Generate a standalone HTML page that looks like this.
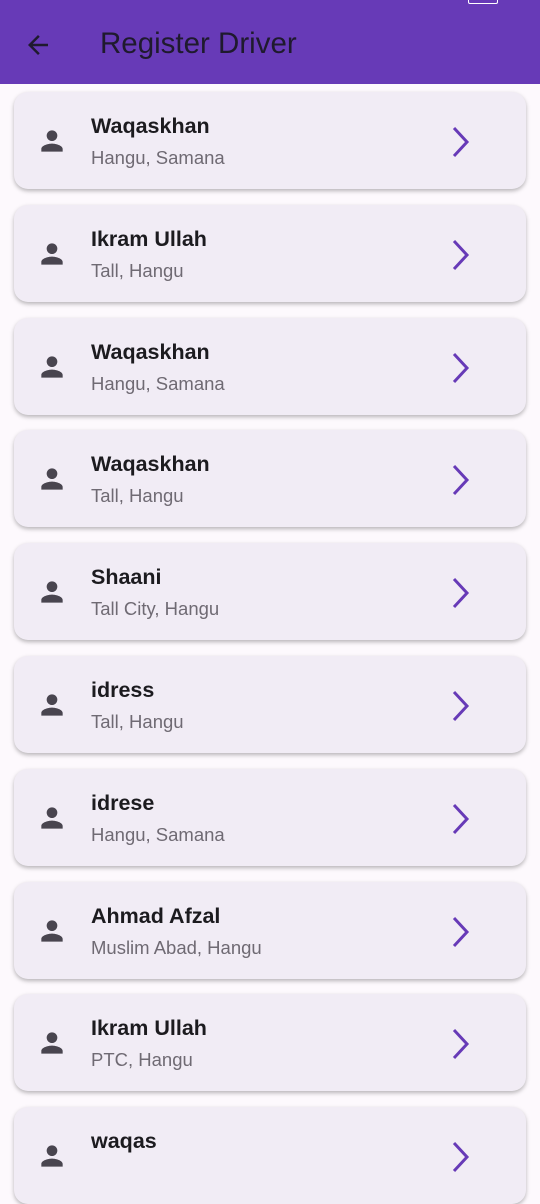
<!DOCTYPE html><html><head><style>
body{margin:0;width:540px;height:1163px;overflow:hidden;background:#fdf9fd;font-family:"Liberation Sans",sans-serif;position:relative}
.hdr{position:absolute;top:0;left:0;width:540px;height:84px;background:#673ab7}
.hdr .t{position:absolute;left:100px;top:27px;font-size:29.5px;color:#1f1a2e}
.card{position:absolute;left:14px;width:512px;height:97px;background:#f1ecf5;border-radius:14px;box-shadow:0 2px 4px rgba(0,0,0,.28)}
.n{position:absolute;left:77px;top:22px;font-size:21.5px;font-weight:bold;color:#1c1b1f}
.s{position:absolute;left:77px;top:55px;font-size:18.5px;color:#6f6a73}
.ic{position:absolute;left:22px;top:33px}
.ch{position:absolute;left:434px;top:33px}
</style></head><body>
<div class="hdr"><svg style="position:absolute;left:23px;top:30px" width="30" height="30" viewBox="0 0 24 24"><path d="M20 11H7.8l5.6-5.6L12 4l-8 8 8 8 1.4-1.4L7.8 13H20z" fill="#1f1a2e"/></svg><div class="t">Register Driver</div>
<div style="position:absolute;left:468px;top:0;width:28px;height:3px;border:1.5px solid #fff;border-top:none;border-radius:0 0 2px 2px"></div></div>
<div id="l"></div>
<script>
var d=[["Waqaskhan","Hangu, Samana"],["Ikram Ullah","Tall, Hangu"],["Waqaskhan","Hangu, Samana"],["Waqaskhan","Tall, Hangu"],["Shaani","Tall City, Hangu"],["idress","Tall, Hangu"],["idrese","Hangu, Samana"],["Ahmad Afzal","Muslim Abad, Hangu"],["Ikram Ullah","PTC, Hangu"],["waqas",""]];
var h="";d.forEach(function(x,i){h+='<div class="card" style="top:'+(92+i*112.8)+'px"><svg class="ic" width="32" height="32" viewBox="0 0 24 24"><path d="M12 12a4 4 0 1 0 0-8 4 4 0 0 0 0 8zm0 2c-2.7 0-8 1.3-8 4v2h16v-2c0-2.7-5.3-4-8-4z" fill="#49454f"/></svg><div class="n">'+x[0]+'</div><div class="s">'+x[1]+'</div><svg class="ch" width="26" height="34" viewBox="0 0 26 34"><path d="M6 3l13 14-13 14" fill="none" stroke="#673ab7" stroke-width="3"/></svg></div>'});
document.getElementById("l").innerHTML=h;
</script>
</body></html>
